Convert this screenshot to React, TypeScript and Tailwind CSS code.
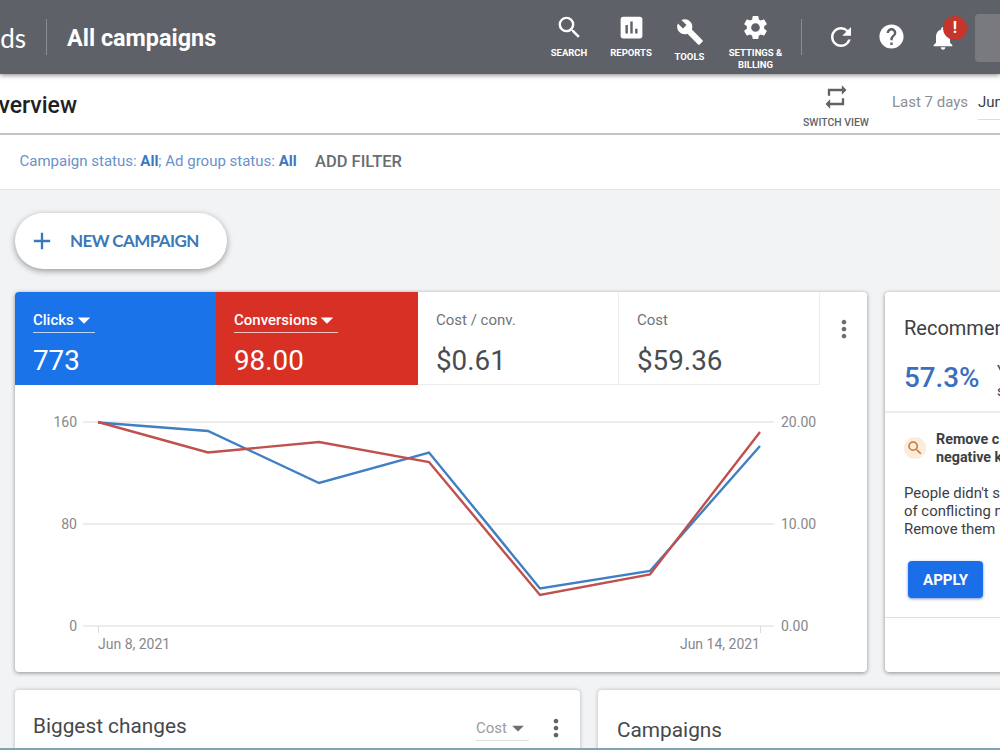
import React from 'react';
import {
  MdAdd,
  MdArrowDropDown,
  MdAssessment,
  MdBuild,
  MdHelp,
  MdMoreVert,
  MdNotifications,
  MdRefresh,
  MdRepeat,
  MdSearch,
  MdSettings,
} from 'react-icons/md';

const clicks = [
  [83, 37.5],
  [193, 46],
  [304, 98],
  [414, 67.5],
  [525, 203.5],
  [635, 186],
  [745, 61],
];

const conversions = [
  [83, 37],
  [193, 67.5],
  [304, 57],
  [414, 77],
  [525, 210],
  [635, 189.5],
  [745, 47],
];

const toPoints = (data: number[][]) => data.map((p) => p.join(',')).join(' ');

function HeaderTool({
  icon,
  label,
  className = '',
}: {
  icon: React.ReactNode;
  label: React.ReactNode;
  className?: string;
}) {
  return (
    <div className={`flex flex-col items-center text-center text-[9.5px] leading-3 font-bold text-white ${className}`}>
      {icon}
      <span className="mt-[5px] whitespace-nowrap">{label}</span>
    </div>
  );
}

function Header() {
  return (
    <header className="relative z-10 flex h-[74px] shrink-0 bg-[#5f6168] text-white shadow-[0_1px_5px_rgba(0,0,0,0.5)]">
      <div className="flex h-[75px] w-[46px] items-center">
        <span className="flex w-[26px] justify-end font-['Lato',sans-serif] text-[26px] leading-8">ds</span>
      </div>
      <div className="mt-[19px] h-9 w-px bg-[#8b8d92]" />
      <h1 className="ml-5 w-[469px] pt-[22px] text-[23.4px] leading-8 font-bold whitespace-nowrap">All campaigns</h1>
      <HeaderTool className="w-[66px] pt-[13px]" icon={<MdSearch size={29} />} label="SEARCH" />
      <HeaderTool className="w-[58px] pt-[13px]" icon={<MdAssessment size={29} />} label="REPORTS" />
      <HeaderTool className="w-[59px] pt-[18px]" icon={<MdBuild size={28} />} label="TOOLS" />
      <HeaderTool
        className="w-[73px] pt-[13px]"
        icon={<MdSettings size={29} />}
        label={
          <>
            SETTINGS &amp;
            <br />
            BILLING
          </>
        }
      />
      <div className="ml-[9px] mt-[19px] h-9 w-px bg-[#8b8d92]" />
      <MdRefresh size={30} className="mt-[22px] ml-6 shrink-0" />
      <MdHelp size={29} className="mt-[22px] ml-[21px] shrink-0" />
      <div className="relative mt-6 ml-[23px] h-7 w-7 shrink-0">
        <MdNotifications size={28} />
        <span className="absolute -top-2 left-[14px] flex h-6 w-6 items-center justify-center rounded-full bg-[#c5352b] text-[16px] leading-none font-bold">
          !
        </span>
      </div>
      <div className="mt-[14px] ml-[18px] h-12 flex-1 rounded-l bg-[#797a7e]" />
    </header>
  );
}

function TitleBar() {
  return (
    <div className="flex h-[61px] shrink-0 border-b-2 border-[#c4c4c6] bg-white">
      <div className="flex w-[77px] shrink-0 justify-end pt-4">
        <h2 className="text-[23px] leading-8 font-medium text-[#202124]">verview</h2>
      </div>
      <div className="ml-[719px] flex w-20 shrink-0 flex-col items-center pt-[9px] text-[#5f6368]">
        <MdRepeat size={28} />
        <span className="mt-[6px] text-[10.4px] leading-3 font-medium whitespace-nowrap">SWITCH VIEW</span>
      </div>
      <span className="ml-4 w-[86px] shrink-0 pt-[18px] text-[15px] leading-5 whitespace-nowrap text-[#8c8f93]">
        Last 7 days
      </span>
      <div className="mt-[18px] h-7 flex-1 border-b border-[#dadce0] text-[15px] leading-5 text-[#3c4043]">
        Jun
      </div>
    </div>
  );
}

function FilterBar() {
  return (
    <div className="flex h-[55px] shrink-0 items-center border-b border-[#e3e5e8] bg-white pl-[19.5px] whitespace-nowrap">
      <span className="mb-0.5 w-[295.5px] text-[15px] leading-5 text-[#6a91ca]">
        Campaign status: <b className="text-[#3f76c0]">All</b>; Ad group status: <b className="text-[#3f76c0]">All</b>
      </span>
      <span className="text-[16.5px] leading-5 font-medium text-[#6a6d71]">ADD FILTER</span>
    </div>
  );
}

function Metric({
  label,
  value,
  menu = false,
  className = '',
}: {
  label: string;
  value: string;
  menu?: boolean;
  className?: string;
}) {
  return (
    <div className={`h-[93px] pt-[18px] pl-[18px] ${className}`}>
      <div
        className={`flex h-[23px] w-fit items-start text-[15px] leading-5 ${
          menu ? 'border-b border-white/70 font-medium' : ''
        }`}
      >
        {label}
        {menu && <MdArrowDropDown size={30} className="-mt-[5px] -mr-[4px] -ml-[5px]" />}
      </div>
      <div className={`mt-3 text-[27.8px] leading-8 ${menu ? '' : 'text-[#4a4c50]'}`}>{value}</div>
    </div>
  );
}

function Chart() {
  return (
    <svg width="852" height="287" viewBox="0 0 852 287" className="block text-[14px]">
      {[37, 139, 241].map((y) => (
        <line key={y} x1="68" x2="759" y1={y} y2={y} stroke="#ececec" strokeWidth="2" />
      ))}
      <path d="M83.5 241v7M745.5 241v7" stroke="#dcdcdc" />
      <polyline points={toPoints(clicks)} fill="none" stroke="#3f7fc4" strokeWidth="2.4" />
      <polyline points={toPoints(conversions)} fill="none" stroke="#c0504d" strokeWidth="2.4" />
      <g fill="#85888c">
        <text x="62" y="42" textAnchor="end">160</text>
        <text x="62" y="144" textAnchor="end">80</text>
        <text x="62" y="246" textAnchor="end">0</text>
        <text x="766" y="42">20.00</text>
        <text x="766" y="144">10.00</text>
        <text x="766" y="246">0.00</text>
        <text x="83" y="264">Jun 8, 2021</text>
        <text x="745" y="264" textAnchor="end">Jun 14, 2021</text>
      </g>
    </svg>
  );
}

function Scorecard() {
  return (
    <section className="h-[380px] w-[852px] shrink-0 rounded-sm bg-white shadow-[0_1px_4px_rgba(0,0,0,0.42)]">
      <div className="flex">
        <Metric label="Clicks" value="773" menu className="w-[201px] rounded-tl-sm bg-[#1a73e8] text-white" />
        <Metric label="Conversions" value="98.00" menu className="w-[202px] bg-[#d93025] text-white" />
        <Metric label="Cost / conv." value="$0.61" className="w-[201px] border-r border-b border-[#eceded] text-[#717478]" />
        <Metric label="Cost" value="$59.36" className="w-[201px] border-r border-b border-[#eceded] text-[#717478]" />
        <MdMoreVert size={28} className="mt-[23px] ml-[9.5px] text-[#6a6d71]" />
      </div>
      <Chart />
    </section>
  );
}

function Recommendations() {
  return (
    <section className="h-[380px] w-[130px] shrink-0 rounded-sm bg-white whitespace-nowrap text-[#3c4043] shadow-[0_1px_4px_rgba(0,0,0,0.42)]">
      <div className="h-[121px] border-b-2 border-[#ececed] pt-5 pl-[19px]">
        <h3 className="text-[20px] leading-8">Recommen</h3>
        <div className="mt-[17px] flex">
          <span className="w-[93px] shrink-0 pt-px text-[27.8px] leading-8 font-medium text-[#3a6fbd]">57.3%</span>
          <span className="text-[15px] leading-[20px]">
            Y
            <br />
            s
          </span>
        </div>
      </div>
      <div className="h-[205px] border-b border-[#dfe0e2] pt-[17px] pl-[19px]">
        <div className="flex items-center">
          <span className="flex h-[22px] w-[22px] shrink-0 items-center justify-center rounded-full bg-[#fdecdc] text-[#c27a35]">
            <MdSearch size={18} />
          </span>
          <p className="ml-[10px] text-[14.3px] leading-[18px] font-bold">
            Remove c
            <br />
            negative k
          </p>
        </div>
        <p className="mt-[18px] text-[14.9px] leading-[18px]">
          People didn't s
          <br />
          of conflicting n
          <br />
          Remove them
        </p>
        <button className="mt-[23px] ml-1 h-[37px] w-[75px] rounded-sm bg-[#1a6fe8] pt-0.5 text-[15px] font-bold text-white shadow-[0_1px_3px_rgba(26,80,180,0.6)]">
          APPLY
        </button>
      </div>
    </section>
  );
}

export default function App() {
  return (
    <div className="flex h-[750px] w-[1000px] flex-col overflow-hidden border-b-2 border-[#7ea3b3] bg-[#f1f3f4] font-['Roboto',sans-serif]">
      <Header />
      <TitleBar />
      <FilterBar />
      <main className="flex flex-col pl-[15px]">
        <button className="mt-[23px] flex h-[56px] w-[212px] shrink-0 items-center rounded-full bg-white pl-[13px] text-[#3a78b8] shadow-[0_2px_6px_rgba(0,0,0,0.38)]">
          <MdAdd size={28} />
          <span className="ml-[14px] font-['Lato',sans-serif] text-[17px] leading-6 font-bold tracking-[-0.6px] whitespace-nowrap">
            NEW CAMPAIGN
          </span>
        </button>
        <div className="mt-[23px] flex gap-[18px]">
          <Scorecard />
          <Recommendations />
        </div>
        <div className="mt-[18px] flex h-[120px] shrink-0 gap-[18px] text-[#46484c]">
          <section className="flex w-[565px] shrink-0 items-start rounded-sm bg-white pl-[18px] shadow-[0_0_4px_rgba(0,0,0,0.25)]">
            <h3 className="w-[443px] pt-5 text-[20.8px] leading-8">Biggest changes</h3>
            <div className="mt-7 flex h-[23px] items-start border-b border-[#e0e0e0] text-[15px] leading-5 text-[#9a9da1]">
              Cost
              <MdArrowDropDown size={28} className="-mt-[4px] -mr-[3px] -ml-[3px] text-[#6b6e72]" />
            </div>
            <MdMoreVert size={28} className="mt-6 ml-[13px] text-[#5f6368]" />
          </section>
          <section className="w-[420px] shrink-0 rounded-sm bg-white pt-6 pl-[19px] shadow-[0_0_4px_rgba(0,0,0,0.25)]">
            <h3 className="text-[20.8px] leading-8">Campaigns</h3>
          </section>
        </div>
      </main>
    </div>
  );
}
